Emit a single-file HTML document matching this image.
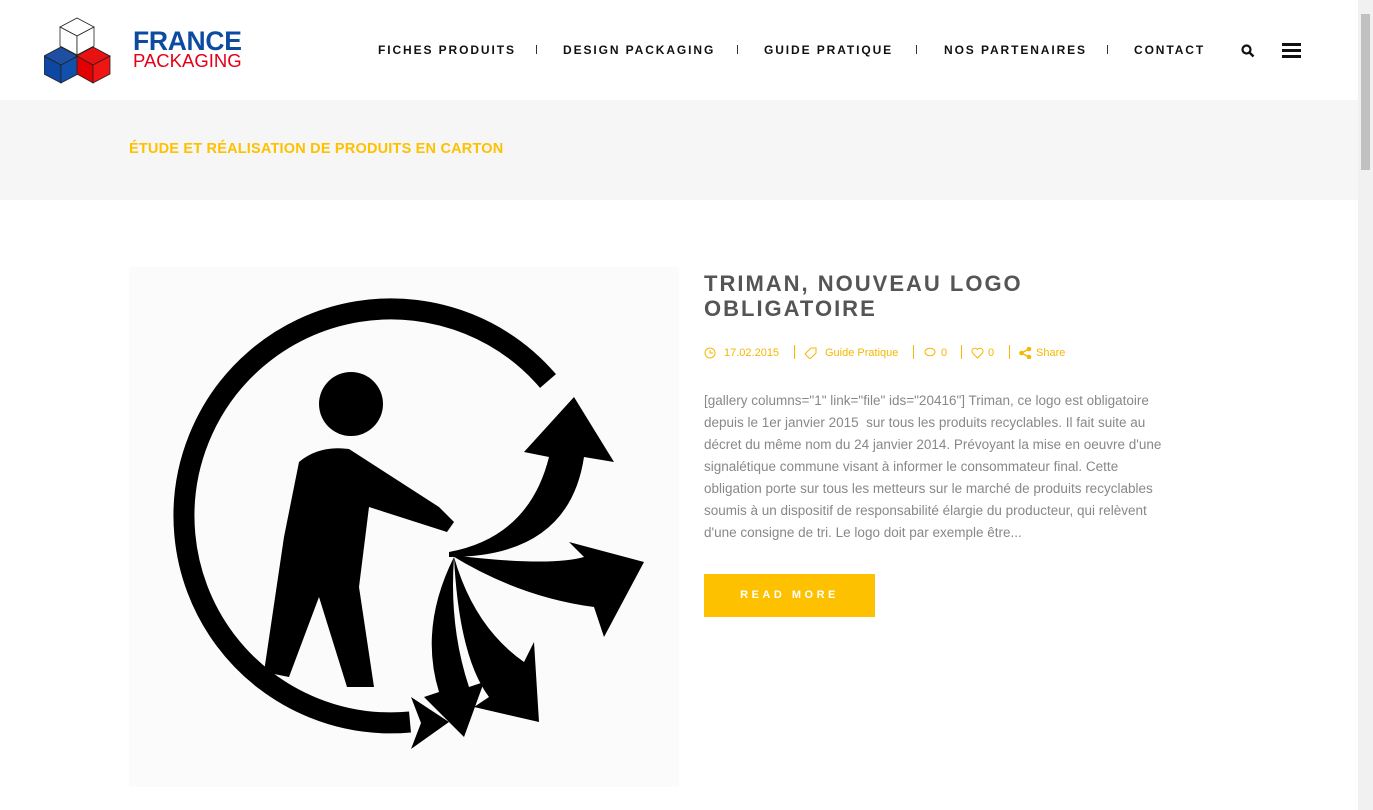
<!DOCTYPE html>
<html><head><meta charset="utf-8"><style>
body{margin:0;width:1373px;height:810px;overflow:hidden;background:#fff;font-family:"Liberation Sans",sans-serif;position:relative}
.hdr{position:absolute;left:0;top:0;width:1358px;height:100px;background:#fff}
.nav{position:absolute;top:43px;font-size:12px;font-weight:bold;letter-spacing:1.9px;color:#111}
.sep{position:absolute;top:45px;width:1px;height:9px;background:#333}
.band{position:absolute;left:0;top:100px;width:1358px;height:100px;background:#f6f6f6}
.band div{position:absolute;left:129px;top:41px;}
.sb{position:absolute;right:0;top:0;width:15px;height:810px;background:#f1f1f1}
.sb div{position:absolute;left:3px;top:14px;width:9px;height:156px;background:#c1c1c1}
h1{position:absolute;left:704px;top:271px;margin:0;font-size:22px;line-height:25px;letter-spacing:2px;color:#555;font-weight:bold}
.meta{position:absolute;left:704px;top:347px;font-size:11px;color:#f5b800}
.meta span{position:absolute;white-space:nowrap}
.vs{position:absolute;top:-2px;width:1px;height:14px;background:#f5b800}
p{position:absolute;left:704px;top:390px;width:520px;margin:0;font-size:13.5px;line-height:22px;color:#888;white-space:nowrap}
.btn{position:absolute;left:704px;top:574px;width:171px;height:43px;background:#fdc100;color:#fff;font-size:11px;font-weight:bold;letter-spacing:3.5px;text-align:center;line-height:43px}
</style></head><body>
<div class="hdr">
<svg style="position:absolute;left:44px;top:17px" width="68" height="68" viewBox="0 0 68 68">
<g stroke="#222" stroke-width="0.8">
<polygon points="33,1 50,10 33,19 16,10" fill="#fff"/><polygon points="16,10 33,19 33,38 16,29" fill="#fff"/><polygon points="33,19 50,10 50,29 33,38" fill="#fff"/>
<polygon points="17,30 34,39 17,48 0,39" fill="#1e4fa3"/><polygon points="0,39 17,48 17,66 0,57" fill="#0d47a1"/><polygon points="17,48 34,39 34,57 17,66" fill="#1150ab"/>
<polygon points="49,30 66,39 49,48 32,39" fill="#e81010"/><polygon points="33,39 49,48 49,66 33,57" fill="#e20000"/><polygon points="49,48 66,39 66,57 49,66" fill="#f01515"/>
</g></svg>
<div style="position:absolute;left:133px;top:26px;font-size:26.5px;font-weight:bold;color:#0d4ba0;letter-spacing:-0.3px">FRANCE</div>
<div style="position:absolute;left:133px;top:50px;font-size:18.5px;color:#e4001b;">PACKAGING</div>
<div class="nav" style="left:378px">FICHES PRODUITS</div><div class="sep" style="left:536px"></div>
<div class="nav" style="left:563px">DESIGN PACKAGING</div><div class="sep" style="left:737px"></div>
<div class="nav" style="left:764px">GUIDE PRATIQUE</div><div class="sep" style="left:916px"></div>
<div class="nav" style="left:944px">NOS PARTENAIRES</div><div class="sep" style="left:1107px"></div>
<div class="nav" style="left:1134px">CONTACT</div>
<svg style="position:absolute;left:1241px;top:44px" width="14" height="14" viewBox="0 0 14 14"><circle cx="5.5" cy="5.5" r="4" fill="none" stroke="#111" stroke-width="2.2"/><line x1="8.5" y1="8.5" x2="12.5" y2="12.5" stroke="#111" stroke-width="2.5"/></svg>
<div style="position:absolute;left:1282px;top:43px;width:19px;height:3px;background:#111;box-shadow:0 6px 0 #111,0 12px 0 #111"></div>
</div>
<div class="band"><div style="font-size:14.5px;font-weight:bold;color:#fdc100;letter-spacing:0.2px">ÉTUDE ET RÉALISATION DE PRODUITS EN CARTON</div></div>
<div class="sb"><div></div></div>
<svg style="position:absolute;left:129px;top:267px" width="550" height="520" viewBox="0 0 550 520">
<rect width="550" height="520" fill="#fbfbfb"/>
<path d="M419 114 A207 207 0 1 0 281 455" fill="none" stroke="#000" stroke-width="21"/>
<polygon points="282,430 320,455 282,482 292,456" fill="#000"/>
<circle cx="222" cy="137" r="32" fill="#000"/>
<path d="M170 195 Q190 178 220 182 L310 240 L325 255 L318 265 L240 240 L230 320 L245 420 L218 420 L190 330 L160 410 L135 405 L155 270 Z" fill="#000"/>
<path d="M320 285 Q400 270 420 190 L395 185 L445 130 L485 195 L455 190 Q440 290 320 290 Z" fill="#000"/>
<path d="M322 288 Q420 300 455 290 L440 275 L515 295 L475 370 L465 340 Q390 330 322 288 Z" fill="#000"/>
<path d="M325 290 Q330 390 360 430 L345 440 L410 455 L405 375 L395 395 Q345 360 325 290 Z" fill="#000"/>
<path d="M325 290 Q290 360 310 425 L295 430 L335 470 L355 415 L340 420 Q320 360 325 290 Z" fill="#000"/>
</svg>
<h1>TRIMAN, NOUVEAU LOGO<br>OBLIGATOIRE</h1>
<div class="meta">
<svg style="position:absolute;left:0;top:0" width="12" height="12"><circle cx="6" cy="6" r="5" fill="none" stroke="#f5b800"/><path d="M6 3V6H9" fill="none" stroke="#f5b800"/></svg>
<span style="left:20px">17.02.2015</span><div class="vs" style="left:90px"></div>
<svg style="position:absolute;left:100px;top:0" width="13" height="12"><path d="M1 7L7 1H12V6L6 12Z" fill="none" stroke="#f5b800"/></svg>
<span style="left:121px">Guide Pratique</span><div class="vs" style="left:209px"></div>
<svg style="position:absolute;left:220px;top:0" width="12" height="11"><ellipse cx="6" cy="5" rx="5" ry="3.8" fill="none" stroke="#f5b800"/></svg>
<span style="left:237px">0</span><div class="vs" style="left:257px"></div>
<svg style="position:absolute;left:267px;top:0" width="13" height="12"><path d="M6.5 11L1.5 6A2.8 2.8 0 016.5 2.5A2.8 2.8 0 0111.5 6Z" fill="none" stroke="#f5b800"/></svg>
<span style="left:284px">0</span><div class="vs" style="left:305px"></div>
<svg style="position:absolute;left:315px;top:0" width="13" height="12"><circle cx="2.5" cy="6" r="2.3" fill="#f5b800"/><circle cx="10" cy="2" r="2.3" fill="#f5b800"/><circle cx="10" cy="10" r="2.3" fill="#f5b800"/><path d="M2.5 6L10 2M2.5 6L10 10" stroke="#f5b800" stroke-width="1.5"/></svg>
<span style="left:332px">Share</span>
</div>
<p>[gallery columns="1" link="file" ids="20416"] Triman, ce logo est obligatoire<br>depuis le 1er janvier 2015&nbsp; sur tous les produits recyclables. Il fait suite au<br>décret du même nom du 24 janvier 2014. Prévoyant la mise en oeuvre d'une<br>signalétique commune visant à informer le consommateur final. Cette<br>obligation porte sur tous les metteurs sur le marché de produits recyclables<br>soumis à un dispositif de responsabilité élargie du producteur, qui relèvent<br>d'une consigne de tri. Le logo doit par exemple être...</p>
<div class="btn">READ MORE</div>
</body></html>
